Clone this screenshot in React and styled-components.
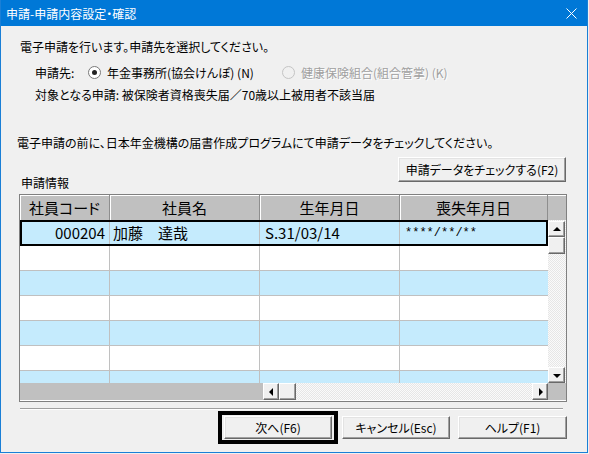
import React from 'react'
import styled, { createGlobalStyle } from 'styled-components'

const GlobalStyle = createGlobalStyle`
  html, body {
    margin: 0;
    padding: 0;
    background: #f0f0f0;
  }
  body {
    font-family: "Noto Sans CJK JP", "Noto Sans", sans-serif;
    font-size: 12px;
    color: #000;
  }
`

const Window = styled.div`
  width: 588px;
  height: 453px;
  box-sizing: border-box;
  border: 1px solid #1a7fd6;
  border-top: none;
  background: #f0f0f0;
  display: flex;
  flex-direction: column;
`

const TitleBar = styled.div`
  height: 26px;
  background: #0078d7;
  color: #fff;
  display: flex;
  align-items: center;
  justify-content: space-between;
  padding: 0 10px 0 5px;
  font-size: 12px;
  font-feature-settings: "palt";
`

const Content = styled.div`
  padding: 13px 20px 0 16px;
  display: flex;
  flex-direction: column;
  font-feature-settings: "palt";
`

const Line = styled.div`
  line-height: 16px;
  margin-top: ${p => p.top || 0}px;
  margin-left: ${p => p.indent || 0}px;
  white-space: nowrap;
`

const RadioRow = styled.div`
  display: flex;
  align-items: center;
  height: 16px;
  margin-top: 9px;
  margin-left: 18px;
  white-space: nowrap;
`

const RadioLabel = styled.span`
  width: 53px;
`

const Option = styled.label`
  display: flex;
  align-items: center;
  gap: 6px;
  margin-right: 28px;
  color: ${p => (p.disabled ? '#a0a0a0' : '#000')};
  text-shadow: ${p => (p.disabled ? '1px 1px 0 #fff' : 'none')};
`

const Radio = styled.span`
  width: 13px;
  height: 13px;
  box-sizing: border-box;
  border-radius: 50%;
  border: 1px solid ${p => (p.disabled ? '#c4c4c4' : '#7a7a7a')};
  background: ${p => (p.disabled ? '#f0f0f0' : '#fff')};
  display: inline-flex;
  align-items: center;
  justify-content: center;
  &::after {
    content: '';
    width: 5px;
    height: 5px;
    border-radius: 50%;
    background: #222;
    display: ${p => (p.checked ? 'block' : 'none')};
  }
`

const CheckRow = styled.div`
  display: flex;
  justify-content: space-between;
  height: 34px;
  margin-top: 6px;
`

const SectionLabel = styled.div`
  align-self: flex-end;
  margin-left: 4px;
  line-height: 16px;
`

const Button = styled.button`
  width: ${p => p.w || 108}px;
  height: ${p => p.h || 23}px;
  box-sizing: border-box;
  padding: 0;
  background: #f0f0f0;
  border: 1px solid;
  border-color: #fff #696969 #696969 #fff;
  box-shadow: inset -1px -1px 0 #a0a0a0, inset 1px 1px 0 #e3e3e3;
  font-family: "Noto Sans CJK JP", sans-serif;
  font-size: 12px;
  font-feature-settings: "palt";
  color: #000;
`

const DefaultFrame = styled.div`
  border: 4px solid #000;
  padding: 1px 2px;
  display: flex;
`

const Grid = styled.div`
  width: 548px;
  height: 208px;
  box-sizing: border-box;
  margin: 3px 0 0 2px;
  border: 1px solid #808080;
  display: flex;
  flex-direction: column;
  background: #fff;
`

const HeaderRow = styled.div`
  display: flex;
  height: 25px;
  background: #c0c0c0;
  box-shadow: inset 0 1px 0 #fff;
`

const HeaderCell = styled.div`
  width: ${p => p.w}px;
  box-sizing: border-box;
  text-align: center;
  font-size: 15px;
  line-height: 25px;
  border-right: 1px solid #8e8e8e;
  box-shadow: inset 1px 0 0 #fff;
`

const Body = styled.div`
  display: flex;
  height: 163px;
`

const Rows = styled.div`
  width: 528px;
  overflow: hidden;
`

const Row = styled.div`
  display: flex;
  height: ${p => (p.selected ? 26 : 25)}px;
  box-sizing: border-box;
  background: ${p => (p.alt ? '#c5ebfd' : '#fff')};
  border: ${p => (p.selected ? '2px solid #000' : 'none')};
  border-bottom: ${p => (p.selected ? '2px solid #000' : '1px solid #c0c0c0')};
`

const Cell = styled.div`
  width: ${p => p.w}px;
  box-sizing: border-box;
  border-right: 1px solid #c0c0c0;
  font-size: ${p => (p.mono ? 12 : 15)}px;
  font-family: ${p => (p.mono ? '"Liberation Mono", monospace' : 'inherit')};
  text-align: ${p => p.align || 'left'};
  padding: ${p => (p.align === 'right' ? '0 4px 0 0' : '0 0 0 3px')};
  line-height: 22px;
  white-space: nowrap;
  &:last-child {
    border-right: none;
  }
`

const VScroll = styled.div`
  width: 18px;
  display: flex;
  flex-direction: column;
  padding-top: 1px;
  background: repeating-conic-gradient(#fafafa 0 25%, #e6e6e6 0 50%) 0 0 / 2px 2px;
`

const ScrollButton = styled.div`
  width: ${p => p.w || 17}px;
  height: ${p => p.h || 16}px;
  box-sizing: border-box;
  background: #f0f0f0;
  border: 1px solid;
  border-color: #fff #696969 #696969 #fff;
  box-shadow: inset -1px -1px 0 #a0a0a0;
  display: flex;
  align-items: center;
  justify-content: center;
  flex-shrink: 0;
`

const Arrow = styled.span`
  width: 0;
  height: 0;
  border: 4px solid transparent;
  ${p => p.dir === 'up' && 'border-bottom-color:#000; border-top-width:0; margin-top:-1px;'}
  ${p => p.dir === 'down' && 'border-top-color:#000; border-bottom-width:0; margin-top:1px;'}
  ${p => p.dir === 'left' && 'border-right-color:#000; border-left-width:0; margin-left:-1px;'}
  ${p => p.dir === 'right' && 'border-left-color:#000; border-right-width:0; margin-left:1px;'}
`

const Track = styled.div`
  flex: 1;
`

const HScroll = styled.div`
  display: flex;
  height: 17px;
  background: repeating-conic-gradient(#fafafa 0 25%, #e6e6e6 0 50%) 0 0 / 2px 2px;
`

const Frozen = styled.div`
  width: ${p => p.w}px;
  background: #c0c0c0;
  flex-shrink: 0;
`

const Separator = styled.div`
  width: 543px;
  margin: 6px 0 0 3px;
  border-top: 1px solid #a0a0a0;
  border-bottom: 1px solid #fff;
`

const ButtonRow = styled.div`
  display: flex;
  justify-content: flex-end;
  align-items: center;
  margin-top: 1px;
  height: 33px;
`

const Spacer = styled.div`
  width: ${p => p.w}px;
`

const cols = [90, 150, 140, 148]

const rows = [
  { code: '000204', name: '加藤　達哉', birth: 'S.31/03/14', lost: '****/**/**' },
  {}, {}, {}, {}, {}, {}
]

export default function App() {
  return (
    <>
      <GlobalStyle />
      <Window>
        <TitleBar>
          <span>申請-申請内容設定・確認</span>
          <svg width="11" height="11" viewBox="0 0 11 11">
            <path d="M0.5 0.5 L10.5 10.5 M10.5 0.5 L0.5 10.5" stroke="#fff" strokeWidth="1" />
          </svg>
        </TitleBar>
        <Content>
          <Line indent={3}>電子申請を行います。申請先を選択してください。</Line>
          <RadioRow>
            <RadioLabel>申請先:</RadioLabel>
            <Option>
              <Radio checked />
              年金事務所(協会けんぽ) (N)
            </Option>
            <Option disabled>
              <Radio disabled />
              健康保険組合(組合管掌) (K)
            </Option>
          </RadioRow>
          <Line top={7} indent={18}>対象となる申請: 被保険者資格喪失届／70歳以上被用者不該当届</Line>
          <Line top={32}>電子申請の前に、日本年金機構の届書作成プログラムにて申請データをチェックしてください。</Line>
          <CheckRow>
            <SectionLabel>申請情報</SectionLabel>
            <Button w={168} h={25} style={{ marginRight: 1 }}>申請データをチェックする(F2)</Button>
          </CheckRow>
          <Grid>
            <HeaderRow>
              <HeaderCell w={90}>社員コード</HeaderCell>
              <HeaderCell w={150}>社員名</HeaderCell>
              <HeaderCell w={140}>生年月日</HeaderCell>
              <HeaderCell w={148}>喪失年月日</HeaderCell>
            </HeaderRow>
            <Body>
              <Rows>
                {rows.map((r, i) => (
                  <Row key={i} alt={i % 2 === 0} selected={i === 0}>
                    <Cell w={i === 0 ? cols[0] - 2 : cols[0]} align="right">{r.code}</Cell>
                    <Cell w={cols[1]}>{r.name}</Cell>
                    <Cell w={cols[2]} style={{ paddingLeft: 5 }}>{r.birth}</Cell>
                    <Cell w={i === 0 ? cols[3] - 2 : cols[3]} mono style={{ paddingLeft: 5 }}>{r.lost}</Cell>
                  </Row>
                ))}
              </Rows>
              <VScroll>
                <ScrollButton><Arrow dir="up" /></ScrollButton>
                <ScrollButton h={17} />
                <Track />
                <ScrollButton><Arrow dir="down" /></ScrollButton>
              </VScroll>
            </Body>
            <HScroll>
              <Frozen w={243} />
              <ScrollButton w={16} h={17}><Arrow dir="left" /></ScrollButton>
              <ScrollButton w={17} h={17} />
              <Track />
              <ScrollButton w={16} h={17}><Arrow dir="right" /></ScrollButton>
              <Frozen w={18} />
            </HScroll>
          </Grid>
          <Separator />
          <ButtonRow>
            <DefaultFrame>
              <Button>次へ(F6)</Button>
            </DefaultFrame>
            <Spacer w={4} />
            <Button>キャンセル(Esc)</Button>
            <Spacer w={8} />
            <Button w={109}>ヘルプ(F1)</Button>
          </ButtonRow>
        </Content>
      </Window>
    </>
  )
}
